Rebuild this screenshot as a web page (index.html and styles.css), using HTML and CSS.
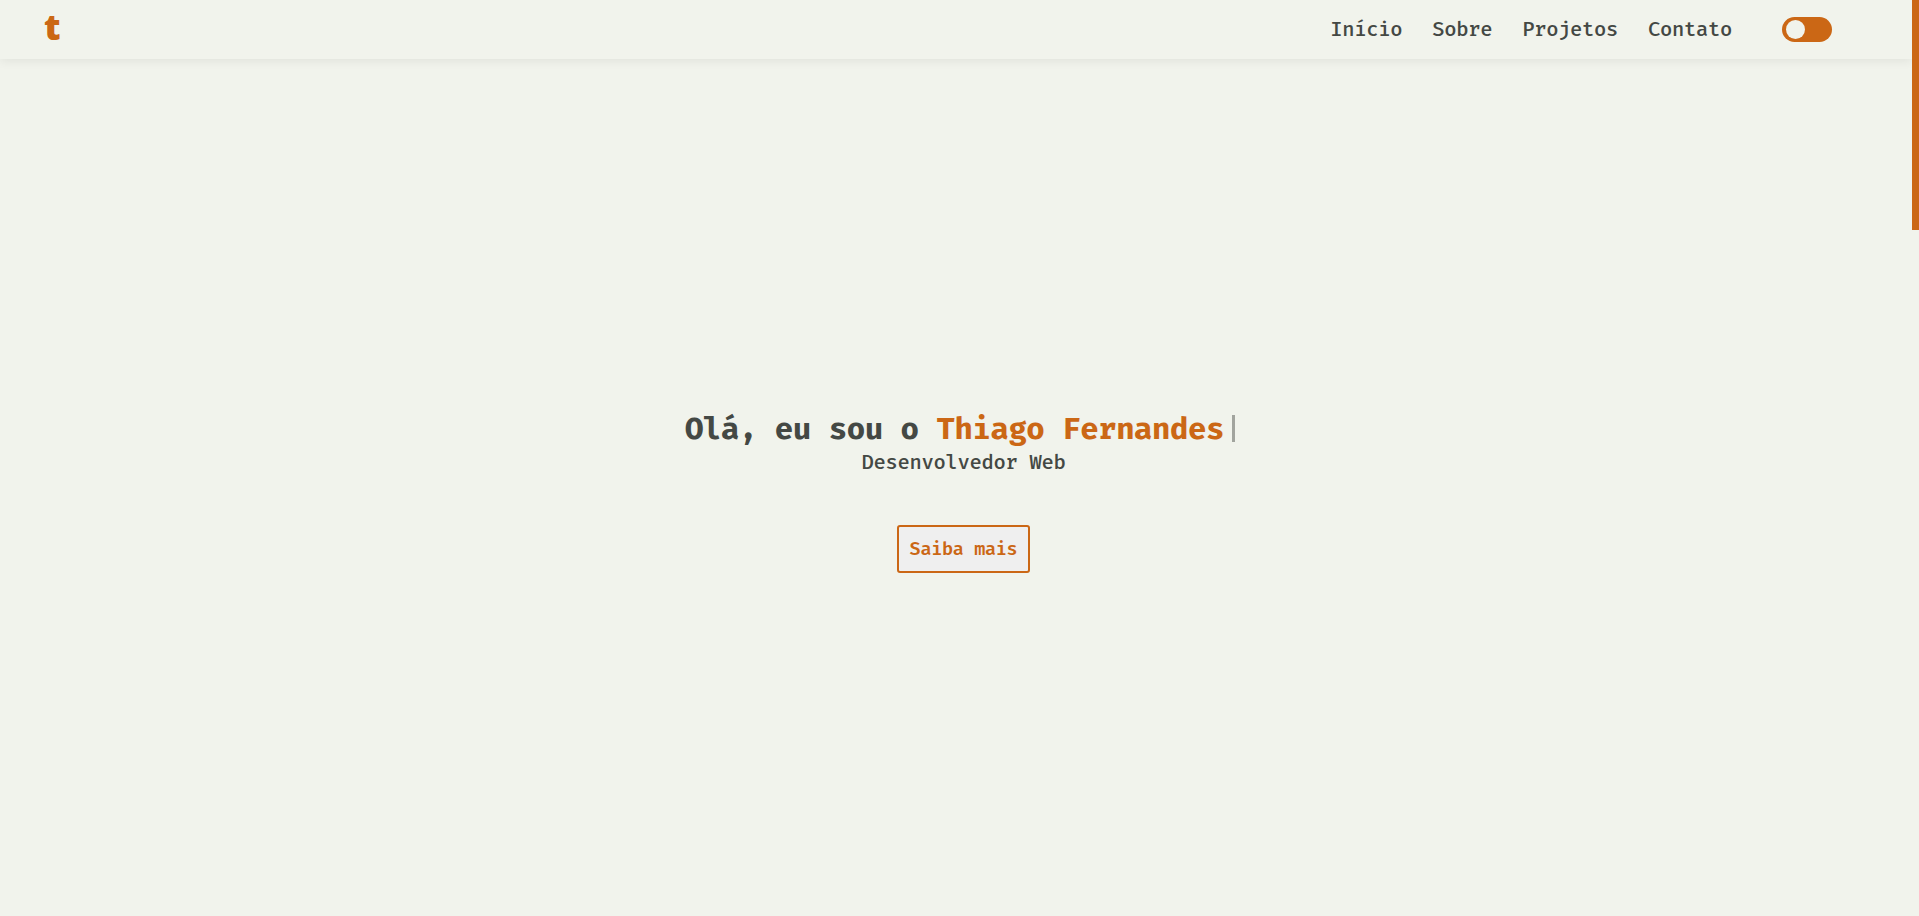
FILE: index.html
```html
<!DOCTYPE html>
<html lang="pt-BR">
<head>
<meta charset="utf-8">
<title>Thiago Fernandes</title>
<link rel="stylesheet" href="styles.css">
</head>
<body>
<div class="page">
  <header class="header">
    <a class="logo">t</a>
    <nav class="nav">
      <a>Início</a><a>Sobre</a><a>Projetos</a><a>Contato</a>
    </nav>
    <div class="toggle"><span class="knob"></span></div>
  </header>
  <main class="hero">
    <h1 class="title"><span>Olá, eu sou o&nbsp;</span><span class="name">Thiago Fernandes</span><span class="cursor"></span></h1>
    <p class="subtitle">Desenvolvedor Web</p>
    <button class="more">Saiba mais</button>
  </main>
</div>
<div class="scrollbar"><div class="thumb"></div></div>
</body>
</html>
```
FILE: styles.css
```css
* { box-sizing: border-box; margin: 0; padding: 0; }
body {
  display: flex;
  height: 916px;
  overflow: hidden;
  background: #f1f3ec;
  color: #444844;
  font-family: "Fira Code", "DejaVu Sans Mono", monospace;
}
.page { flex: 1; display: flex; flex-direction: column; overflow: hidden; }
.header {
  display: flex;
  align-items: center;
  flex: none;
  height: 59px;
  padding: 0 80px 0 44px;
  box-shadow: 0 2px 10px rgba(0, 0, 0, 0.07);
}
.logo {
  color: #cb6715;
  font: 800 36px/53px "Open Sans", sans-serif;
  height: 59px;
}
.nav {
  display: flex;
  gap: 30px;
  margin-left: auto;
  font-size: 20px;
  font-weight: 500;
  letter-spacing: -0.32px;
}
.toggle {
  width: 50px;
  height: 25px;
  margin-left: 50px;
  padding: 3px 4px;
  border-radius: 13px;
  background: #cb6715;
}
.knob { display: block; width: 19px; height: 19px; border-radius: 50%; background: #f1f3ec; }
.hero {
  display: flex;
  flex-direction: column;
  align-items: center;
  padding: 351px 0 0 15px;
}
.title {
  display: flex;
  align-items: center;
  height: 38px;
  font-size: 30px;
  letter-spacing: -0.5px;
  white-space: nowrap;
}
.name { color: #cb6715; }
.cursor { width: 3px; height: 27px; margin: -2px 7px 0 8px; background: #a2a49e; }
.subtitle {
  height: 30px;
  font-size: 20px;
  line-height: 30px;
  font-weight: 500;
  letter-spacing: -0.32px;
}
.more {
  width: 133px;
  height: 48px;
  margin-top: 47px;
  border: 2px solid #cb6715;
  border-radius: 3px;
  background: #efefef;
  color: #cb6715;
  font: 600 18px "Fira Code", "DejaVu Sans Mono", monospace;
  letter-spacing: -0.3px;
}
.scrollbar { width: 7px; }
.thumb { height: 230px; background: #cb6715; }
```
